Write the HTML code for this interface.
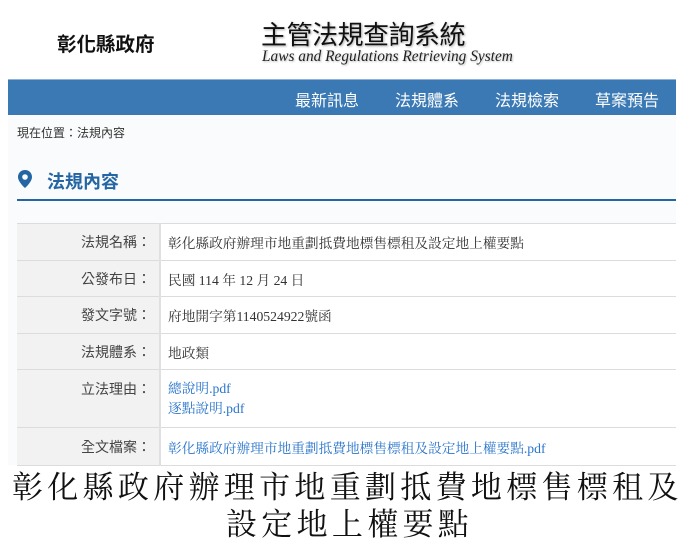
<!DOCTYPE html>
<html><head><meta charset="utf-8"><style>
*{margin:0;padding:0;box-sizing:border-box}
body{width:700px;height:544px;background:#fff;position:relative;overflow:hidden;font-family:"Liberation Sans","Noto Sans CJK TC",sans-serif}
.abs{position:absolute}
.nav{left:8px;top:79px;width:668px;height:36px;background:#3b79b4;border-top:1px solid #8fb1d6}
.nav span{position:absolute;top:7px;color:#fff;font-size:16px}
.content{left:8px;top:115px;width:668px;height:350px;background:#fafbfc}
table{position:absolute;left:17px;top:223px;width:659px;border-collapse:collapse;font-size:13.7px;font-family:"Liberation Serif","Noto Serif CJK SC",serif}
td{border-top:1px solid #dcdcdc;border-bottom:1px solid #dcdcdc;color:#333;vertical-align:middle}
td.l{width:143px;background:#f2f2f2;text-align:right;padding-right:8px;border-right:2px solid #e0e0e0;font-family:"Liberation Sans","Noto Sans CJK TC",sans-serif;font-size:14px;color:#444}
td.v{background:#fff;padding-left:7px}
a{color:#2a75cc;text-decoration:none}
.big{white-space:nowrap;font-family:"Noto Serif CJK SC",serif;font-size:31px;color:#111;letter-spacing:4.3px;line-height:38px}
</style></head><body>
<div class="abs" style="left:57px;top:28px;font-size:19.5px;font-weight:bold;color:#111">彰化縣政府</div>
<div class="abs" style="left:261px;top:15px;font-size:26px;color:#111;letter-spacing:-0.5px;text-shadow:1px 1px 2px #aaa">主管法規查詢系統</div>
<div class="abs" style="left:262px;top:48px;font-size:16px;font-style:italic;font-family:'Liberation Serif',serif;color:#222;white-space:nowrap;transform:scaleX(0.96);transform-origin:left;text-shadow:1px 1px 2px #bbb">Laws and Regulations Retrieving System</div>
<div class="abs nav"><span style="left:287px">最新訊息</span><span style="left:387px">法規體系</span><span style="left:487px">法規檢索</span><span style="left:587px">草案預告</span></div>
<div class="abs content"></div>
<div class="abs" style="left:17px;top:124px;font-size:12px;color:#333">現在位置：法規內容</div>
<svg class="abs" style="left:18px;top:170px" width="14" height="18" viewBox="0 0 14 18"><path d="M7 0C3 0 0 3 0 7c0 5 7 11 7 11s7-6 7-11C14 3 11 0 7 0zm0 4.2a2.8 2.8 0 110 5.6 2.8 2.8 0 010-5.6z" fill="#2465a3"/></svg>
<div class="abs" style="left:47px;top:168px;font-size:18px;color:#2465a3;font-weight:bold">法規內容</div>
<div class="abs" style="left:17px;top:199px;width:659px;height:2px;background:#2465a3"></div>
<table>
<tr style="height:37px"><td class="l">法規名稱：</td><td class="v">彰化縣政府辦理市地重劃抵費地標售標租及設定地上權要點</td></tr>
<tr style="height:36px"><td class="l">公發布日：</td><td class="v">民國 114 年 12 月 24 日</td></tr>
<tr style="height:37px"><td class="l">發文字號：</td><td class="v">府地開字第1140524922號函</td></tr>
<tr style="height:36px"><td class="l">法規體系：</td><td class="v">地政類</td></tr>
<tr style="height:58px"><td class="l" style="vertical-align:top;padding-top:9px">立法理由：</td><td class="v" style="line-height:20px"><a>總說明.pdf</a><br><a>逐點說明.pdf</a></td></tr>
<tr style="height:38px"><td class="l">全文檔案：</td><td class="v"><a>彰化縣政府辦理市地重劃抵費地標售標租及設定地上權要點.pdf</a></td></tr>
</table>
<div class="abs big" style="left:12px;top:466px">彰化縣政府辦理市地重劃抵費地標售標租及</div>
<div class="abs big" style="left:226px;top:503px">設定地上權要點</div>
</body></html>
